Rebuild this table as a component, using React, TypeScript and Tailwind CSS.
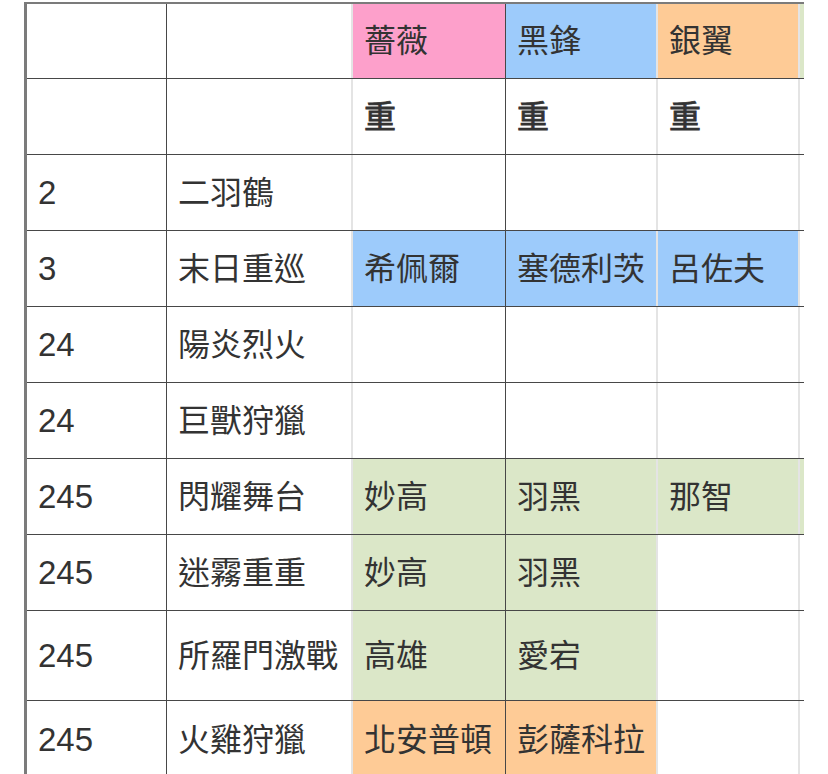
import React from "react";

type Cell = { t?: string; bg?: string; bold?: boolean };

const PINK = "bg-[#fda0cb]";
const BLUE = "bg-[#9dcbfb]";
const ORANGE = "bg-[#fecb96]";
const GREEN = "bg-[#dbe7c8]";

const rows: { h: string; cells: Cell[] }[] = [
  { h: "h-[75px]", cells: [{}, {}, { t: "薔薇", bg: PINK }, { t: "黑鋒", bg: BLUE }, { t: "銀翼", bg: ORANGE }, { bg: GREEN }] },
  { h: "h-[76px]", cells: [{}, {}, { t: "重", bold: true }, { t: "重", bold: true }, { t: "重", bold: true }, {}] },
  { h: "h-[76px]", cells: [{ t: "2" }, { t: "二羽鶴" }, {}, {}, {}, {}] },
  { h: "h-[76px]", cells: [{ t: "3" }, { t: "末日重巡" }, { t: "希佩爾", bg: BLUE }, { t: "塞德利茨", bg: BLUE }, { t: "呂佐夫", bg: BLUE }, {}] },
  { h: "h-[76px]", cells: [{ t: "24" }, { t: "陽炎烈火" }, {}, {}, {}, {}] },
  { h: "h-[76px]", cells: [{ t: "24" }, { t: "巨獸狩獵" }, {}, {}, {}, {}] },
  { h: "h-[76px]", cells: [{ t: "245" }, { t: "閃耀舞台" }, { t: "妙高", bg: GREEN }, { t: "羽黑", bg: GREEN }, { t: "那智", bg: GREEN }, { bg: GREEN }] },
  { h: "h-[76px]", cells: [{ t: "245" }, { t: "迷霧重重" }, { t: "妙高", bg: GREEN }, { t: "羽黑", bg: GREEN }, {}, {}] },
  { h: "h-[90px]", cells: [{ t: "245" }, { t: "所羅門激戰" }, { t: "高雄", bg: GREEN }, { t: "愛宕", bg: GREEN }, {}, {}] },
  { h: "h-[78px]", cells: [{ t: "245" }, { t: "火雞狩獵" }, { t: "北安普頓", bg: ORANGE }, { t: "彭薩科拉", bg: ORANGE }, {}, {}] },
];

const colCls = [
  "w-[140px] border-r border-r-[#474747] text-[33px]",
  "w-[186px] border-r-2 border-r-[#e4e4e4] text-[32px]",
  "w-[153px] border-r border-r-[#474747] text-[32px]",
  "w-[152px] border-r-2 border-r-[#e4e4e4] text-[32px]",
  "w-[142px] border-r-2 border-r-[#e4e4e4] text-[32px]",
  "w-[120px] text-[32px]",
];

export default function App() {
  return (
    <div
      className="min-h-[774px] w-[828px] bg-white pt-[2px] pl-[24px] text-[#333333]"
      style={{ fontFamily: '"Liberation Sans", "Noto Sans CJK TC", sans-serif' }}
    >
      <div className="w-[780px] overflow-hidden border-l-[3px] border-t-2 border-l-[#7b7b7b] border-t-[#7b7b7b]">
        {rows.map((r, i) => (
          <div key={i} className={`flex w-[900px] border-b border-b-[#474747] ${r.h}`}>
            {r.cells.map((c, j) => (
              <div
                key={j}
                className={`flex shrink-0 items-center pl-[11px] leading-none whitespace-nowrap font-normal ${colCls[j]} ${c.bg ?? "bg-white"} ${c.bold ? "[-webkit-text-stroke:0.8px_#333333]" : ""}`}
              >
                {c.t ?? ""}
              </div>
            ))}
          </div>
        ))}
      </div>
    </div>
  );
}
